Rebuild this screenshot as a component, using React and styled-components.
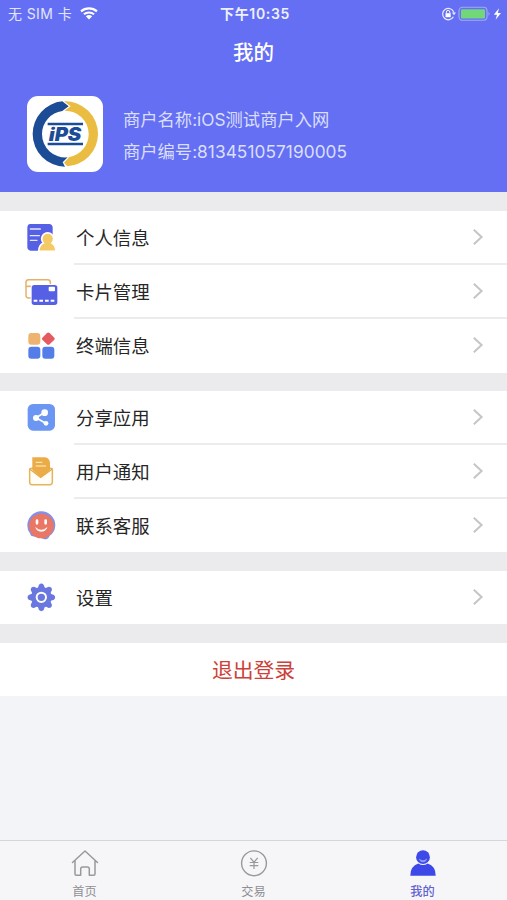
import styled, { createGlobalStyle } from "styled-components";

const GlobalStyle = createGlobalStyle`
  * {
    box-sizing: border-box;
  }

  body {
    margin: 0;
    background: #f2f4f7;
    font-family: Inter, "Noto Sans CJK SC", sans-serif;
  }

  svg {
    display: block;
    flex-shrink: 0;
  }
`;

const Page = styled.div`
  height: 900px;
  display: flex;
  flex-direction: column;
  overflow: hidden;
  background: #f2f4f7;
`;

const Header = styled.header`
  height: 192px;
  flex-shrink: 0;
  background: #646ff3;
  color: #fff;
`;

const StatusBar = styled.div`
  height: 27px;
  padding: 0 5px 0 8px;
  display: grid;
  grid-template-columns: 1fr auto 1fr;
  align-items: center;
  font-size: 14px;
  line-height: 27px;
  white-space: nowrap;
`;

const Carrier = styled.div`
  display: flex;
  align-items: center;
  gap: 8px;
  letter-spacing: 0.4px;
  color: #e3e5fd;
`;

const Clock = styled.div`
  font-size: 14px;
  font-weight: 600;
  letter-spacing: 0.65px;
  color: #eef0fe;
`;

const StatusIcons = styled.div`
  display: flex;
  align-items: center;
  justify-content: flex-end;
`;

const Title = styled.h1`
  margin: 0;
  height: 50px;
  line-height: 52px;
  text-align: center;
  font-size: 20.5px;
  font-weight: 500;
`;

const Merchant = styled.div`
  display: flex;
  align-items: center;
  gap: 20px;
  padding: 19px 27px 0;
`;

const LogoBox = styled.div`
  width: 76px;
  height: 76px;
  flex-shrink: 0;
  border-radius: 11px;
  background: #fff;
`;

const MerchantText = styled.div`
  padding-top: 3px;
`;

const MerchantLine = styled.div`
  height: 32px;
  line-height: 32px;
  font-size: 17.3px;
  color: #dadffd;
  white-space: nowrap;
`;

const Digits = styled.span`
  letter-spacing: 0.05px;
`;

const Menu = styled.main`
  flex: 1;
`;

const Group = styled.section`
  border-top: ${(props) => props.$gap}px solid #ebebee;
  background: #fff;
`;

const Row = styled.div`
  height: ${(props) => props.$height || 54}px;
  display: flex;
  align-items: center;
  padding-left: 23px;
`;

const RowBody = styled.div`
  flex: 1;
  align-self: stretch;
  display: flex;
  align-items: center;
  justify-content: space-between;
  margin-left: 15px;
  padding: 0 23px 0 2px;
  font-size: 18.4px;
  color: #262626;
  border-bottom: 2px solid ${(props) => (props.$last ? "transparent" : "#ececee")};
`;

const Logout = styled.div`
  height: 53px;
  line-height: 55px;
  text-align: center;
  font-size: 20.8px;
  color: #cc4138;
`;

const TabBar = styled.nav`
  height: 60px;
  flex-shrink: 0;
  display: grid;
  grid-template-columns: repeat(3, 1fr);
  background: #f6f6f9;
  border-top: 1px solid #d5d7da;
`;

const Tab = styled.div`
  display: flex;
  flex-direction: column;
  align-items: center;
  padding-top: 8px;
  gap: 6px;
  font-size: 12.2px;
  line-height: 18px;
  font-weight: ${(props) => (props.$active ? 500 : 400)};
  color: ${(props) => (props.$active ? "#6362cf" : "#8f8f92")};
`;

const WifiIcon = () => (
  <svg width="18" height="13" viewBox="0 0 18 13">
    <g fill="none" stroke="#fff" strokeWidth="2.1">
      <path d="M1 4.4C5.6 .4 12.4 .4 17 4.4" />
      <path d="M3.9 7.3C6.8 4.8 11.2 4.8 14.1 7.3" />
    </g>
    <path d="M5.8 9.2Q9 6.8 12.2 9.2L9 12.4Z" fill="#fff" />
  </svg>
);

const LockIcon = () => (
  <svg width="16" height="14" viewBox="0 0 16 14">
    <path d="M12.4 9.7A5.7 5.7 0 1 1 12.8 5.4" fill="none" stroke="#e9ebff" strokeWidth="1.2" />
    <path d="M10.9 5.4H15L13 8.2Z" fill="#e9ebff" />
    <path d="M4.5 6.2H9.7V10.2H4.5Z" fill="#fff" />
    <path d="M5.4 6.2V5.1a1.7 1.7 0 0 1 3.4 0V6.2" fill="none" stroke="#fff" />
  </svg>
);

const BatteryIcon = () => (
  <svg width="45" height="16" viewBox="0 0 45 16">
    <rect x="2" y="1.3" width="28" height="13" rx="3.5" fill="none" stroke="#a4abf3" strokeWidth="1.1" />
    <rect x="4" y="3.2" width="24" height="9.3" rx="1.2" fill="#72d778" />
    <path d="M31.5 5.8q2.2 2 0 4.2Z" fill="#a4abf3" />
    <path d="M42 2.2L36.8 8.8H40L38.6 13.8L44 7.1H40.8Z" fill="#fff" />
  </svg>
);

const Logo = () => (
  <svg width="76" height="76" viewBox="0 0 228 228">
    <path
      d="M106 16A98 98 0 0 0 17 114A98 98 0 0 0 114 212L107 199L122 184A70 70 0 0 1 45 114A70 70 0 0 1 106 45L125 31Z"
      fill="#1d4c96"
    />
    <path
      d="M111 16A98 98 0 0 1 213 114A98 98 0 0 1 121 211L111 200L127 183A70 70 0 0 0 185 114A70 70 0 0 0 112 44L131 31Z"
      fill="#ebbc42"
    />
    <path d="M62 84H168M62 144H168" stroke="#1d4c96" strokeWidth="8" />
    <text
      x="65"
      y="134"
      textLength="98"
      lengthAdjust="spacingAndGlyphs"
      fontFamily="Inter, sans-serif"
      fontSize="55"
      fontWeight="900"
      fontStyle="italic"
      fill="#1d4c96"
    >
      iPS
    </text>
  </svg>
);

const MenuIcon = ({ children }) => (
  <svg width="36" height="36" viewBox="0 0 108 108">
    {children}
  </svg>
);

const ProfileIcon = () => (
  <MenuIcon>
    <path d="M22 12H80Q89 14 89 24V92H23Q13 91 13 81V23Q13 13 22 12Z" fill="#5560e5" />
    <path d="M22 27H52M22 47H49M22 61H42" stroke="#e5e7ff" strokeWidth="4" strokeLinecap="round" />
    <path
      d="M47 94Q48 74 61 69A18 18 0 1 1 87 69Q98 75 99 94Z"
      fill="#f4ca66"
      stroke="#fff"
      strokeWidth="5"
    />
    <path d="M44 97H101" stroke="#fff" strokeWidth="5" />
  </MenuIcon>
);

const CardsIcon = () => (
  <MenuIcon>
    <rect x="9" y="17" width="73" height="55" rx="8" fill="#fff" stroke="#e7b069" strokeWidth="4.5" />
    <path d="M9 37H30" stroke="#e7b069" strokeWidth="5" />
    <rect x="23" y="30" width="82" height="66" rx="11" fill="#fff" />
    <rect x="26" y="33" width="77" height="60" rx="8" fill="#5560e5" />
    <rect x="77" y="38" width="19" height="14" rx="3" fill="#fff" />
    <path d="M32 80H95" stroke="#fff" strokeWidth="6" strokeDasharray="11 6" />
  </MenuIcon>
);

const BlocksIcon = () => (
  <MenuIcon>
    <rect x="16" y="15" width="36" height="35" rx="9" fill="#efb370" />
    <path d="M72 15q4-3 8 0L94 29q3 3 0 6L80 49q-4 3-8 0L58 35q-3-3 0-6Z" fill="#e35b60" />
    <rect x="16" y="56" width="36" height="36" rx="9" fill="#557de8" />
    <rect x="58" y="56" width="36" height="36" rx="9" fill="#557de8" />
  </MenuIcon>
);

const ShareIcon = () => (
  <MenuIcon>
    <rect x="14" y="12" width="82" height="80" rx="16" fill="#6b97f3" />
    <path d="M66 37L39 53L68 70" fill="none" stroke="#fff" strokeWidth="5" />
    <circle cx="65" cy="38" r="10" fill="#fff" />
    <circle cx="39" cy="54" r="9" fill="#fff" />
    <circle cx="69" cy="70" r="7" fill="#fff" />
  </MenuIcon>
);

const MailIcon = () => (
  <MenuIcon>
    <path d="M20 47Q20 43 26 43H82Q88 43 88 47V85Q88 92 81 92H27Q20 92 20 85Z" fill="#fffdf5" stroke="#e7b45e" strokeWidth="4.5" />
    <path d="M28 10H67Q81 14 81 28V48L54 70L28 48Z" fill="#ebac48" />
    <path d="M38 25H58M38 36H69" stroke="#fff1cd" strokeWidth="3" />
    <path d="M20 45L53 70L88 45" fill="none" stroke="#e7a948" strokeWidth="4" />
  </MenuIcon>
);

const SupportIcon = () => (
  <MenuIcon>
    <path
      d="M13 53A42 42 0 0 1 97 51Q96 74 80 83Q77 94 64 94L54 90L26 84Q22 82 21 76Q13 67 13 53Z"
      fill="#858fe4"
    />
    <circle cx="55" cy="54" r="37" fill="#ea7665" />
    <path d="M42 38V46M68 38V46" stroke="#fff" strokeWidth="8" strokeLinecap="round" />
    <path d="M38 59Q55 74 72 59Q68 70 55 70T38 59Z" fill="#fff" stroke="#fff" strokeWidth="2" />
  </MenuIcon>
);

const SettingsIcon = () => (
  <MenuIcon>
    {[0, 45, 90, 135, 180, 225, 270, 315].map((angle) => (
      <path
        key={angle}
        d="M43 28L48 14Q55 7 62 14L67 28Z"
        fill="#6a77df"
        transform={`rotate(${angle} 55 52)`}
      />
    ))}
    <circle cx="55" cy="52" r="31" fill="#6a77df" />
    <circle cx="55" cy="52" r="14" fill="none" stroke="#fff" strokeWidth="6" />
  </MenuIcon>
);

const Chevron = () => (
  <svg width="12" height="18" viewBox="0 0 12 18">
    <path d="M1.8 1.8L9.6 9L1.8 16.2" fill="none" stroke="#c5c5c7" strokeWidth="2" />
  </svg>
);

const HomeIcon = () => (
  <svg width="28" height="28" viewBox="0 0 28 28">
    <path
      d="M1.5 13.5L14 2L26.5 13.5M4 11.5V25Q4 26.2 5.2 26.2H9.7V20Q9.7 18 11.7 18H16.3Q18.3 18 18.3 20V26.2H22.8Q24 26.2 24 25V11.5"
      fill="none"
      stroke="#99999d"
      strokeWidth="1.5"
      strokeLinejoin="round"
      strokeLinecap="round"
    />
  </svg>
);

const TradeIcon = () => (
  <svg width="28" height="28" viewBox="0 0 28 28">
    <g fill="none" stroke="#99999d">
      <circle cx="14" cy="14.3" r="12.4" strokeWidth="1.4" />
      <path d="M10.3 8.8L14 13.2L17.7 8.8M14 13.2V20M9.7 13.5H18.3M9.7 16.6H18.3" strokeWidth="1.2" />
    </g>
  </svg>
);

const MineIcon = () => (
  <svg width="28" height="28" viewBox="0 0 28 28">
    <circle cx="14" cy="8.2" r="6.9" fill="#3d48e8" />
    <path d="M1.3 26.7Q1.3 17 9.3 14.5Q14 17.6 18.7 14.5Q26.7 17 26.7 26.7Z" fill="#3d48e8" />
    <path d="M9.8 9.5Q14 12.8 18.2 9.5Q17.4 13.2 14 13.2T9.8 9.5Z" fill="#929af5" />
  </svg>
);

const groups = [
  {
    gap: 19,
    rows: [
      { label: "个人信息", Icon: ProfileIcon },
      { label: "卡片管理", Icon: CardsIcon },
      { label: "终端信息", Icon: BlocksIcon },
    ],
  },
  {
    gap: 18,
    rows: [
      { label: "分享应用", Icon: ShareIcon },
      { label: "用户通知", Icon: MailIcon },
      { label: "联系客服", Icon: SupportIcon, height: 53 },
    ],
  },
  { gap: 19, rows: [{ label: "设置", Icon: SettingsIcon, height: 53 }] },
];

const tabs = [
  { label: "首页", Icon: HomeIcon },
  { label: "交易", Icon: TradeIcon },
  { label: "我的", Icon: MineIcon, active: true },
];

const App = () => {
  return (
    <Page>
      <GlobalStyle />
      <Header>
        <StatusBar>
          <Carrier>
            无 SIM 卡
            <WifiIcon />
          </Carrier>
          <Clock>下午10:35</Clock>
          <StatusIcons>
            <LockIcon />
            <BatteryIcon />
          </StatusIcons>
        </StatusBar>
        <Title>我的</Title>
        <Merchant>
          <LogoBox>
            <Logo />
          </LogoBox>
          <MerchantText>
            <MerchantLine>商户名称:iOS测试商户入网</MerchantLine>
            <MerchantLine>
              商户编号:<Digits>813451057190005</Digits>
            </MerchantLine>
          </MerchantText>
        </Merchant>
      </Header>

      <Menu>
        {groups.map((group, i) => (
          <Group key={i} $gap={group.gap}>
            {group.rows.map(({ label, Icon, height }, j) => (
              <Row key={label} $height={height}>
                <Icon />
                <RowBody $last={j === group.rows.length - 1}>
                  {label}
                  <Chevron />
                </RowBody>
              </Row>
            ))}
          </Group>
        ))}
        <Group $gap={19}>
          <Logout>退出登录</Logout>
        </Group>
      </Menu>

      <TabBar>
        {tabs.map(({ label, Icon, active }) => (
          <Tab key={label} $active={active}>
            <Icon />
            {label}
          </Tab>
        ))}
      </TabBar>
    </Page>
  );
};

export default App;
